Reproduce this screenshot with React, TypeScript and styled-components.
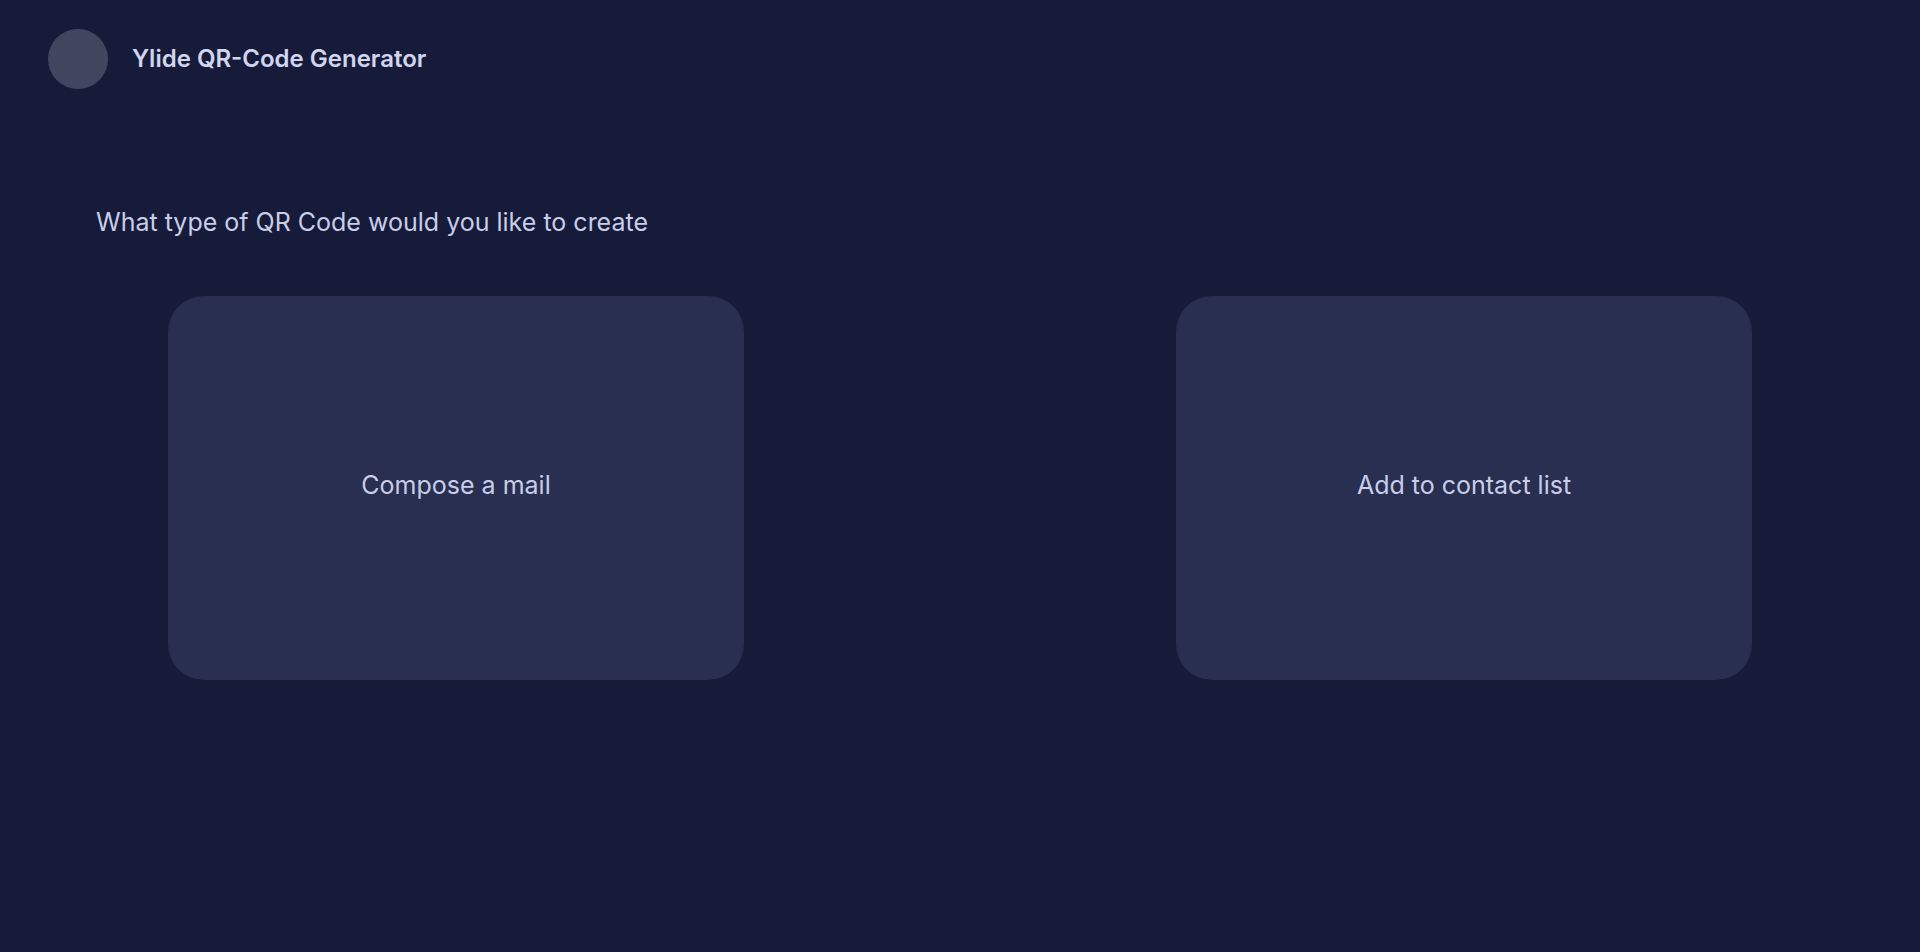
import React from "react";
import styled, { createGlobalStyle } from "styled-components";

const GlobalStyle = createGlobalStyle`
  html, body {
    margin: 0;
    padding: 0;
    background: #171b3a;
    font-family: Inter, "Noto Sans", "Liberation Sans", sans-serif;
  }
  * { box-sizing: border-box; }
`;

const Page = styled.div`
  min-height: 100vh;
  background: #171b3a;
  display: flex;
  flex-direction: column;
`;

const Header = styled.header`
  display: flex;
  align-items: center;
  gap: 24px;
  padding: 29px 48px 0;
`;

const Avatar = styled.div`
  width: 60px;
  height: 60px;
  border-radius: 50%;
  background: #41465f;
  flex-shrink: 0;
`;

const Title = styled.h1`
  margin: 0;
  font-size: 24px;
  font-weight: 600;
  line-height: 32px;
  color: #d1d6ee;
`;

const Main = styled.main`
  display: flex;
  flex-direction: column;
  gap: 58px;
  padding: 117px 96px 0;
`;

const Question = styled.p`
  margin: 0;
  font-size: 25px;
  font-weight: 400;
  line-height: 32px;
  color: #c9cee8;
`;

const Options = styled.div`
  display: flex;
  justify-content: space-between;
  padding: 0 72px;
`;

const OptionCard = styled.button`
  width: 576px;
  height: 384px;
  border: none;
  border-radius: 36px;
  background: #282f50;
  display: flex;
  align-items: center;
  justify-content: center;
  font-family: inherit;
  font-size: 25px;
  font-weight: 400;
  line-height: 32px;
  color: #c9cee8;
  cursor: pointer;
  padding: 0 0 7px;
`;

export default function App() {
  return (
    <>
      <GlobalStyle />
      <Page>
        <Header>
          <Avatar />
          <Title>Ylide QR-Code Generator</Title>
        </Header>
        <Main>
          <Question>What type of QR Code would you like to create</Question>
          <Options>
            <OptionCard>Compose a mail</OptionCard>
            <OptionCard>Add to contact list</OptionCard>
          </Options>
        </Main>
      </Page>
    </>
  );
}
